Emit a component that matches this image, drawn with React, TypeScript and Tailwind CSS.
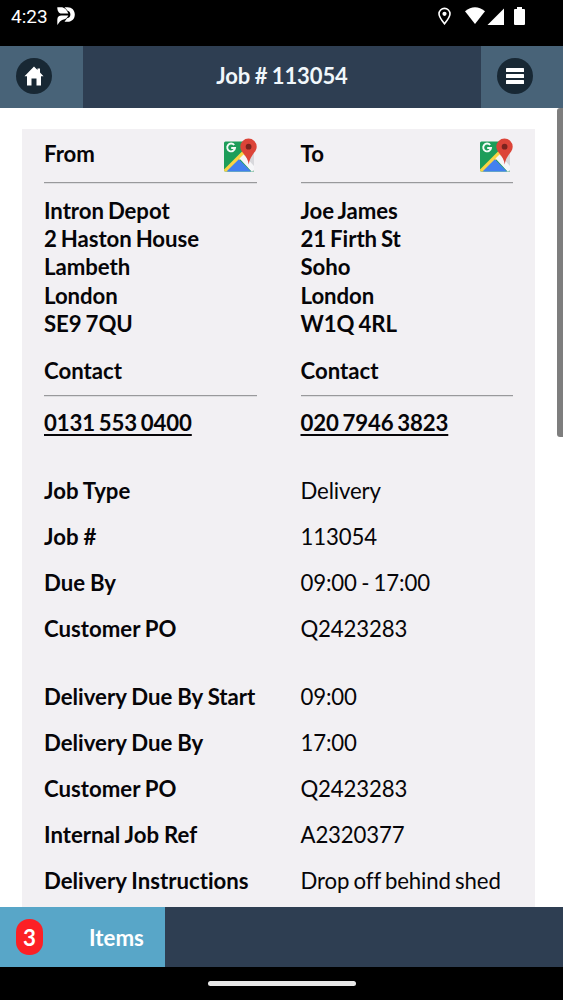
import type { ReactNode } from "react";

interface Party {
  title: string;
  address: string[];
  phone: string;
}

interface Detail {
  label: string;
  value: string;
}

const parties: Party[] = [
  {
    title: "From",
    address: ["Intron Depot", "2 Haston House", "Lambeth", "London", "SE9 7QU"],
    phone: "0131 553 0400",
  },
  {
    title: "To",
    address: ["Joe James", "21 Firth St", "Soho", "London", "W1Q 4RL"],
    phone: "020 7946 3823",
  },
];

const jobDetails: Detail[] = [
  { label: "Job Type", value: "Delivery" },
  { label: "Job #", value: "113054" },
  { label: "Due By", value: "09:00 - 17:00" },
  { label: "Customer PO", value: "Q2423283" },
];

const deliveryDetails: Detail[] = [
  { label: "Delivery Due By Start", value: "09:00" },
  { label: "Delivery Due By", value: "17:00" },
  { label: "Customer PO", value: "Q2423283" },
  { label: "Internal Job Ref", value: "A2320377" },
  { label: "Delivery Instructions", value: "Drop off behind shed" },
];

function StatusBar() {
  return (
    <div className="flex h-[46px] shrink-0 items-start bg-black pl-[11px] pr-[38px] pt-[7px] text-white">
      <span className="font-['Roboto',sans-serif] text-[19px] leading-5">4:23</span>
      <svg viewBox="0 0 18 18" className="ml-[9px] h-[18px] w-[18px]" fill="white">
        <path d="M0.300 0.300H4C7.500 0.300 9.500 2.500 11.300 6.600H4.500C1.500 6.600 0.300 3.500 0.300 0.300Z" />
        <path d="M0.300 18V12.500C0.300 9.800 2 8.600 4.500 8.600H11.300C10 11.300 8.500 12.300 5.800 12.800C3.500 13.300 2.300 15.500 0.300 18Z" />
        <path d="M7.500 0.300H10.500C15 0.300 17.800 3.500 17.800 7.500C17.800 11.800 15 14.800 10.500 14.800H7.500L10 11.300C12.500 11 13.400 9.500 13.400 7.600C13.400 5.500 12.300 4.200 10.600 3.800Z" />
      </svg>
      <div className="ml-auto flex items-start">
        <svg viewBox="0 0 13 18" className="h-[18px] w-[13px]" fill="none" stroke="white" strokeWidth="1.6">
          <path d="M6.500 16.800C3 12.300 1 9.600 1 6.900a5.500 5.500 0 0 1 11 0c0 2.700-2 5.400-5.500 9.900Z" />
          <circle cx="6.500" cy="6.800" r="2.100" fill="white" stroke="none" />
        </svg>
        <svg viewBox="0 0 20 17" className="ml-[14px] h-[17px] w-5" fill="white">
          <path d="M0 4.300Q10-3.800 20 4.300L10 17Z" />
        </svg>
        <svg viewBox="0 0 17 17" className="ml-[2px] mt-[0.500px] h-[17px] w-[17px]" fill="white">
          <path d="M17 0.500V17H0.500Z" />
        </svg>
        <svg viewBox="0 0 11 18" className="ml-[10px] h-[18px] w-[11px]" fill="white">
          <path d="M3 0h5v2h2q1 0 1 1v14q0 1-1 1H1q-1 0-1-1V3q0-1 1-1h2Z" />
        </svg>
      </div>
    </div>
  );
}

function RoundButton({ label, children }: { label: string; children: ReactNode }) {
  return (
    <button aria-label={label} className="flex h-9 w-9 items-center justify-center rounded-full bg-[#182834]">
      {children}
    </button>
  );
}

function Header() {
  return (
    <header className="flex h-[61.500px] shrink-0 bg-[#2e3e52]">
      <div className="flex w-[83px] items-center bg-[#486378] pb-px pl-4">
        <RoundButton label="Home">
          <svg viewBox="0 0 20 20" className="h-5 w-5" fill="white">
            <path d="M10 0.500L13.500 4V2.500H16V6.500L19.500 10.200H17V19.500H12.500V12.500H7.500V19.500H3V10.200H0.500Z" />
          </svg>
        </RoundButton>
      </div>
      <h1 className="flex flex-1 items-center justify-center whitespace-pre pb-0.5 text-[22px] font-bold tracking-[-0.1px] text-[#f1f7fb] [word-spacing:-0.8px]">
        Job # 113054
      </h1>
      <div className="flex w-[82px] items-center bg-[#486378] pb-px pl-4">
        <RoundButton label="Menu">
          <svg viewBox="0 0 18 16" className="h-4 w-[18px]" fill="white">
            <rect width="18" height="4" rx="0.500" />
            <rect y="6" width="18" height="4" rx="0.500" />
            <rect y="12" width="18" height="4" rx="0.500" />
          </svg>
        </RoundButton>
      </div>
    </header>
  );
}

function MapIcon() {
  return (
    <svg viewBox="0 0 34 35" className="h-[35px] w-[34px]">
      <path d="M2.500 3.500H27L31 16V33.500H2.500Q1 33.500 1 32V5Q1 3.500 2.500 3.500Z" fill="#1d9d59" />
      <path d="M17 18L27 9L31 14V32Q31 33.500 29.500 33.500Z" fill="#d8d8dc" />
      <path d="M1 31.500L20 12.500L23.500 15.500L5 33.500H2.500Q1 33.500 1 32Z" fill="#fbd443" />
      <path d="M16.500 20.500L20.500 16.500L31 28V32L28.500 33.500Z" fill="#f6f6f8" />
      <path d="M3.500 33.500L15.800 21.300L28 33.500Z" fill="#4380ef" />
      <path
        d="M25.500 0.500A8.200 8.200 0 0 1 33.700 8.700C33.700 14.500 27 17 25.800 26.500C24.600 17 17.300 14.500 17.300 8.700A8.200 8.200 0 0 1 25.500 0.500Z"
        fill="#dc4438"
      />
      <circle cx="25.600" cy="8.700" r="2.900" fill="#7b231e" />
      <path d="M11.200 7A3.900 3.900 0 1 0 12 10H8.200" fill="none" stroke="#f4fbf7" strokeWidth="1.900" />
    </svg>
  );
}

function PartyColumn({ party }: { party: Party }) {
  return (
    <section className="font-bold">
      <div className="flex h-[53px] items-start justify-between">
        <h2 className="pt-[10.500px]">{party.title}</h2>
        <div className="pt-[9px]">
          <MapIcon />
        </div>
      </div>
      <hr className="h-[2px] border-t border-b border-t-[#99999b] border-b-[#dddde0]" />
      <address className="pt-[12.500px] tracking-[-0.05px] not-italic [word-spacing:-1.400px]">
        {party.address.map((line) => (
          <div key={line}>{line}</div>
        ))}
      </address>
      <h3 className="pb-[10.500px] pt-[18px]">Contact</h3>
      <hr className="h-[2px] border-t border-b border-t-[#99999b] border-b-[#dddde0]" />
      <a
        href="#"
        className="mt-3 block tracking-[-0.12px] underline decoration-2 underline-offset-[3px] [word-spacing:-1.500px]"
      >
        {party.phone}
      </a>
    </section>
  );
}

function DetailList({ items }: { items: Detail[] }) {
  return (
    <dl className="flex flex-col gap-[17.500px]">
      {items.map((item) => (
        <div key={item.label} className="grid grid-cols-2 gap-x-11">
          <dt className="whitespace-nowrap font-bold [word-spacing:-0.500px]">{item.label}</dt>
          <dd className="whitespace-nowrap tracking-[-0.14px] [word-spacing:-1.200px]">{item.value}</dd>
        </div>
      ))}
    </dl>
  );
}

export default function App() {
  return (
    <div className="flex h-[1000px] w-[563px] flex-col overflow-hidden bg-white font-['Lato',sans-serif] [font-variant-ligatures:none]">
      <StatusBar />
      <Header />
      <main className="flex min-h-0 flex-1 justify-between overflow-hidden pl-[22px]">
        <div className="mt-[21.500px] w-[513px] shrink-0 bg-[#f2f0f3] px-[22px] text-[22.200px] leading-[28.400px] text-[#060508] [word-spacing:-0.9px]">
          <div className="grid grid-cols-2 gap-x-11">
            {parties.map((party) => (
              <PartyColumn key={party.title} party={party} />
            ))}
          </div>
          <div className="flex flex-col gap-[39.500px] pt-[39.500px]">
            <DetailList items={jobDetails} />
            <DetailList items={deliveryDetails} />
          </div>
        </div>
        <div className="h-[329px] w-[6px] rounded-l-[3px] bg-[#7e7e7e]" />
      </main>
      <footer className="flex h-[60px] shrink-0 bg-[#2e3e52]">
        <button className="flex w-[165px] items-center bg-[#58a6c8] pl-4 text-[22.300px] font-bold text-white">
          <span className="flex h-9 w-[27px] items-center justify-center rounded-[13px] bg-[#fc2025] pt-px">3</span>
          <span className="ml-[46px] pt-0.5">Items</span>
        </button>
      </footer>
      <div className="flex h-[33px] shrink-0 justify-center bg-black pt-[14px]">
        <div className="h-[5px] w-[148px] rounded-full bg-[#e8e8e8]" />
      </div>
    </div>
  );
}
